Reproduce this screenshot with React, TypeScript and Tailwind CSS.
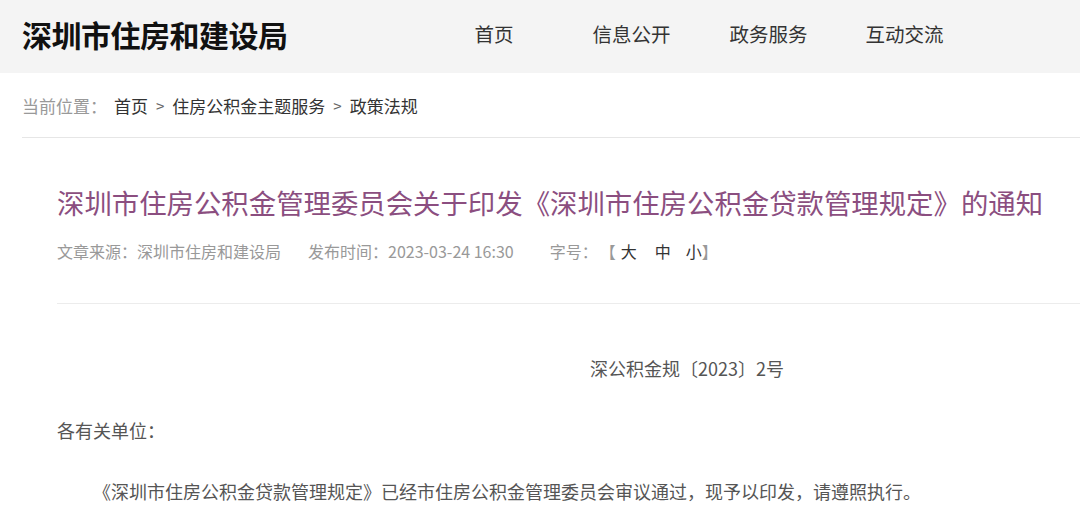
const font = { fontFamily: '"Noto Sans CJK SC", "Noto Sans", sans-serif' };

const navItems = [
  { label: "首页", ml: "ml-0" },
  { label: "信息公开", ml: "ml-[79px]" },
  { label: "政务服务", ml: "ml-[59px]" },
  { label: "互动交流", ml: "ml-[58px]" },
];

export default function App() {
  return (
    <div className="min-h-screen w-[1080px] bg-white overflow-hidden" style={font}>
      {/* --- Header --- */}
      <header className="h-[73px] bg-[#f4f4f4] flex items-center pl-[22px] pb-[6px]">
        <h1 className="text-[30px] leading-none font-bold text-[#111] tracking-[-0.5px]">
          深圳市住房和建设局
        </h1>
        <nav className="flex items-center ml-[187px] text-[19.5px] text-[#333]">
          {navItems.map((item) => (
            <a key={item.label} className={item.ml}>
              {item.label}
            </a>
          ))}
        </nav>
      </header>

      {/* --- Breadcrumb --- */}
      <div className="ml-[22px] h-[65px] flex items-center border-b border-[#e6e6e6] text-[17px] pt-[2px]">
        <span className="text-[#999]">当前位置：</span>
        <a className="text-[#333] ml-[7px]">首页</a>
        <span className="text-[#666] px-[8px] text-[15px]">&gt;</span>
        <a className="text-[#333]">住房公积金主题服务</a>
        <span className="text-[#666] px-[8px] text-[15px]">&gt;</span>
        <a className="text-[#333]">政策法规</a>
      </div>

      {/* --- Article --- */}
      <div className="ml-[57px]">
        <div className="border-b border-[#ececec] pt-[44px] pb-[40px]">
          <h2 className="text-[27.4px] leading-[40px] text-[#8b4e80]">
            深圳市住房公积金管理委员会关于印发《深圳市住房公积金贷款管理规定》的通知
          </h2>
          <div className="mt-[17px] flex items-center text-[16px] leading-[24px] text-[#999]">
            <span>文章来源：深圳市住房和建设局</span>
            <span className="ml-[27px]">发布时间：2023-03-24 16:30</span>
            <span className="ml-[36px]">字号：</span>
            <span className="ml-[2px] flex items-center text-[#333]">
              <span className="text-[#999]">【</span>
              <span className="ml-[5px]">大</span>
              <span className="ml-[18px]">中</span>
              <span className="ml-[15px]">小</span>
              <span className="text-[#999]">】</span>
            </span>
          </div>
        </div>

        <div className="text-[18px] leading-[30px] text-[#555]">
          <p className="mt-[49px] pl-[533px]">深公积金规〔2023〕2号</p>
          <p className="mt-[32px]">各有关单位：</p>
          <p className="mt-[31px] indent-[2em]">
            《深圳市住房公积金贷款管理规定》已经市住房公积金管理委员会审议通过，现予以印发，请遵照执行。
          </p>
        </div>
      </div>
    </div>
  );
}
